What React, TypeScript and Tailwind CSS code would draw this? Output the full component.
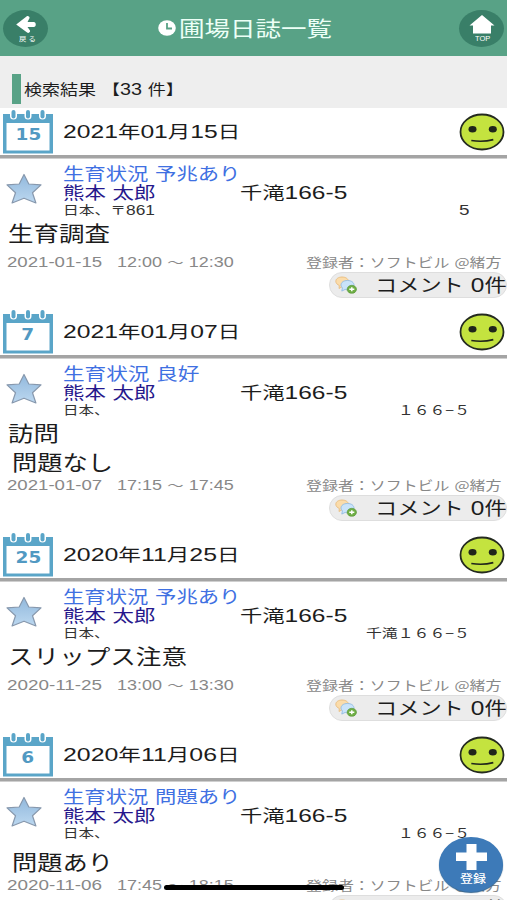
import { useLayoutEffect, useRef, useState } from "react";

type Entry = {
  date: string;
  day: string;
  status: string;
  statusWidth: number;
  address: string;
  addressWidth: number;
  lot: string;
  lotWidth: number;
  notes: { text: string; width: number; indent?: boolean }[];
  dateShort: string;
  time: string;
};

const entries: Entry[] = [
  {
    date: "2021年01月15日",
    day: "15",
    status: "生育状況 予兆あり",
    statusWidth: 178,
    address: "日本、〒861",
    addressWidth: 92,
    lot: "5",
    lotWidth: 11,
    notes: [{ text: "生育調査", width: 102 }],
    dateShort: "2021-01-15",
    time: "12:00 ～ 12:30",
  },
  {
    date: "2021年01月07日",
    day: "7",
    status: "生育状況 良好",
    statusWidth: 137,
    address: "日本、",
    addressWidth: 47,
    lot: "１６６−５",
    lotWidth: 72,
    notes: [
      { text: "訪問", width: 51 },
      { text: "問題なし", width: 101, indent: true },
    ],
    dateShort: "2021-01-07",
    time: "17:15 ～ 17:45",
  },
  {
    date: "2020年11月25日",
    day: "25",
    status: "生育状況 予兆あり",
    statusWidth: 178,
    address: "日本、",
    addressWidth: 47,
    lot: "千滝１６６−５",
    lotWidth: 104,
    notes: [{ text: "スリップス注意", width: 179 }],
    dateShort: "2020-11-25",
    time: "13:00 ～ 13:30",
  },
  {
    date: "2020年11月06日",
    day: "6",
    status: "生育状況 問題あり",
    statusWidth: 178,
    address: "日本、",
    addressWidth: 47,
    lot: "１６６−５",
    lotWidth: 72,
    notes: [{ text: "問題あり", width: 101, indent: true }],
    dateShort: "2020-11-06",
    time: "17:45 ～ 18:15",
  },
];

// Extended lettering: stretches one line of text to the given width.
// Latin digits are set a little larger than the kana and kanji around them.
function Wide({ width, className = "", children }: { width: number; className?: string; children: string }) {
  const ref = useRef<HTMLSpanElement>(null);
  const [scale, setScale] = useState(1.2);

  useLayoutEffect(() => {
    if (ref.current) setScale(width / ref.current.offsetWidth);
  }, [width, children]);

  return (
    <span className={"block h-[1em] shrink-0 whitespace-nowrap leading-none [word-spacing:.09em] " + className} style={{ width }}>
      <span ref={ref} className="inline-block origin-left" style={{ transform: `scaleX(${scale})` }}>
        {children.split(/([0-9:-]+)/).map((part, i) =>
          i % 2 ? (
            <span key={i} className="font-['Liberation_Sans'] text-[1.1em] leading-[0]">{part}</span>
          ) : (
            part
          )
        )}
      </span>
    </span>
  );
}

function CalendarIcon({ day }: { day: string }) {
  return (
    <div className="relative h-[44px] w-[50px] shrink-0">
      <svg viewBox="0 0 50 44" className="block h-full w-full">
        <path d="M0 4h50v39.500h-50z" fill="#5aa5c8" />
        <path d="M3.500 13h43v27.500h-43z" fill="#fff" />
        {[10.5, 25, 39.500].map((x) => (
          <g key={x}>
            <rect x={x - 3.500} y="-1" width="7" height="10.500" rx="3.500" fill="#fff" />
            <rect x={x - 2} y="0" width="4" height="8.500" rx="2" fill="#5aa5c8" />
          </g>
        ))}
      </svg>
      <div className="absolute inset-x-0 top-[17px] flex justify-center text-[#5199c2]">
        <span className="origin-center scale-x-[1.12] font-['DejaVu_Sans'] text-[16.500px] font-bold leading-none">{day}</span>
      </div>
    </div>
  );
}

function FaceIcon() {
  return (
    <svg viewBox="0 0 46 38" className="block h-[38px] w-[46px] shrink-0">
      <ellipse cx="23" cy="19" rx="21.500" ry="17.500" fill="#c4e33f" stroke="#242a20" strokeWidth="1.800" />
      <ellipse cx="13.500" cy="16.300" rx="4" ry="3.300" fill="#20251b" />
      <ellipse cx="33.800" cy="16.300" rx="4" ry="3.300" fill="#20251b" />
      <path d="M12.300 27.500q11.500 1.800 22-.8" fill="none" stroke="#20251b" strokeWidth="1.700" />
    </svg>
  );
}

function StarIcon() {
  return (
    <svg viewBox="0 0 36 32" className="block h-[32px] w-[36px]">
      <defs>
        <linearGradient id="star" x1="0" y1="0" x2="0" y2="1">
          <stop offset="0" stopColor="#91b8dc" />
          <stop offset="1" stopColor="#bcd8f0" />
        </linearGradient>
      </defs>
      <path
        d="M18 1.500l4.800 9.500 12.200.9-8.500 7.800 3.400 10.300-11.900-4.800-11.900 4.800 3.400-10.300-8.500-7.800 12.200-.9z"
        fill="url(#star)"
        stroke="#8798ad"
        strokeWidth="1.200"
        strokeLinejoin="round"
      />
    </svg>
  );
}

function BubblesIcon() {
  return (
    <svg viewBox="0 0 22 18" className="block h-[18px] w-[22px] shrink-0">
      <path d="M7 1c4 0 6.500 2 6.500 4.500s-2.500 5-6 5l-3.500 2 .3-3c-2-1-3.500-2.200-3.500-4.200 0-2.500 2.700-4.300 6.200-4.300z" fill="#fbdcaa" stroke="#e6b876" strokeWidth=".8" />
      <path d="M12.500 4.500c4 0 6.500 2 6.500 4.700s-2.500 4.600-6 4.600c-1 0-2 0-2.800-.4l-3.400 1.700.6-3.200c-.9-.8-1.400-1.800-1.400-2.800 0-2.700 2.500-4.600 6.500-4.600z" fill="#c9e3fa" stroke="#8ab6df" strokeWidth=".8" />
      <ellipse cx="16.800" cy="13.300" rx="4.700" ry="4" fill="#6fae45" stroke="#569436" strokeWidth=".6" />
      <path d="M16.800 11.300v4M14.300 13.300h5" stroke="#fff" strokeWidth="1.500" />
    </svg>
  );
}

function EntryCard({ entry }: { entry: Entry }) {
  const single = entry.notes.length === 1;
  return (
    <article className={"shrink-0 " + (single ? "h-[200px]" : "h-[223px]")}>
      <div className="flex h-[47px] items-center justify-between pl-[3px] pr-[2px]">
        <div className="flex items-center gap-[10px]">
          <CalendarIcon day={entry.day} />
          <Wide width={177} className="mb-[2px] text-[17.500px]">{entry.date}</Wide>
        </div>
        <FaceIcon />
      </div>
      <div className="h-[4px] border-b border-[#cfcfcf] bg-[#a4a4a4]" />

      <div className="flex h-[61px] pl-[6px]">
        <div className="w-[57px] pt-[14px]">
          <StarIcon />
        </div>
        <div className="flex-1 pt-[5px]">
          <div className="h-[19px]">
            <Wide width={entry.statusWidth} className="text-[17.500px] text-[#3f70e2]">{entry.status}</Wide>
          </div>
          <div className="flex h-[21px]">
            <div className="w-[177px]">
              <Wide width={93} className="text-[17.500px] text-[#26188c]">熊本 太郎</Wide>
            </div>
            <Wide width={107} className="text-[17.500px]">千滝166-5</Wide>
          </div>
          <div className="flex justify-between pr-[37px] text-[12.500px] text-[#333]">
            <Wide width={entry.addressWidth}>{entry.address}</Wide>
            <Wide width={entry.lotWidth}>{entry.lot}</Wide>
          </div>
        </div>
      </div>

      <div className={"pl-2 " + (single ? "h-[32px] " : "h-[55px] ") + (single && entry.notes[0].indent ? "pt-[8px]" : "pt-[2px]")}>
        {entry.notes.map((n) => (
          <div key={n.text} className={"h-[29px] " + (n.indent ? "pl-[4px]" : "")}>
            <Wide width={n.width} className="text-[21px]">{n.text}</Wide>
          </div>
        ))}
      </div>

      <div className="flex h-[20px] items-center pb-px pl-[7px] pr-[6px] text-[13px] text-[#888]">
        <Wide width={95}>{entry.dateShort}</Wide>
        <Wide width={117} className="ml-[15px]">{entry.time}</Wide>
        <Wide width={195} className="ml-auto">登録者：ソフトビル @緒方</Wide>
      </div>
      <div className="ml-[329px] flex h-[26px] items-center rounded-full border border-[#dedede] bg-[#ececec] pl-[5px]">
        <BubblesIcon />
        <Wide width={132} className="mb-[3px] ml-[18px] text-[18px]">コメント 0件</Wide>
      </div>
    </article>
  );
}

export default function App() {
  return (
    <div className="relative flex h-[900px] w-[507px] flex-col overflow-hidden bg-white font-['Noto_Sans_CJK_JP',sans-serif] text-[#1c1c1c]">
      <header className="flex h-[56px] shrink-0 items-center justify-between bg-[#58a286] px-[3px]">
        <button className="flex h-[37px] w-[45px] flex-col items-center rounded-[50%] bg-[#397f68] pt-[6px] text-[6px] text-white">
          <svg viewBox="0 0 20 17" className="h-[17px] w-[20px] shrink-0">
            <path d="M10.500 .4c1.500-1 3.800.5 2.800 2.200l-1.800 3.400h6.300c2.600 0 2.600 5 0 5h-6.300l2.300 3.200c1.100 1.600-1.100 3.400-2.700 2.400L.2 8.500z" fill="#fff" />
          </svg>
          <Wide width={17} className="mt-[3px]">戻 る</Wide>
        </button>
        <h1 className="mr-[18px] flex items-center gap-[3px] text-[21px] text-[#ecfff6]">
          <svg viewBox="0 0 18 16" className="h-[16px] w-[18px]">
            <ellipse cx="9" cy="8" rx="8.800" ry="7.800" fill="#fff" />
            <path d="M9 3v5.500h5" fill="none" stroke="#58a286" strokeWidth="1.800" />
          </svg>
          <Wide width={153} className="mb-[2px]">圃場日誌一覧</Wide>
        </h1>
        <button className="flex h-[37px] w-[45px] flex-col items-center rounded-[50%] bg-[#397f68] pt-[5px] font-['Liberation_Sans'] text-[6.500px] text-white">
          <svg viewBox="0 0 26 19" className="h-[19px] w-[26px] shrink-0">
            <path d="M13 0l12.500 10.500h-3.500v8h-18v-8h-3.500z" fill="#fff" />
          </svg>
          <Wide width={15} className="mt-[2px]">TOP</Wide>
        </button>
      </header>

      <div className="flex h-[52px] shrink-0 items-end bg-[#eee] pb-[4px] pl-[12px]">
        <div className="h-[30px] w-[9px] bg-[#58a286]" />
        <div className="flex h-[30px] items-center gap-[6px] pl-[3px] text-[14.500px]">
          <Wide width={72}>検索結果</Wide>
          <Wide width={82}>【33 件】</Wide>
        </div>
      </div>

      {entries.map((e) => (
        <EntryCard key={e.date} entry={e} />
      ))}

      {/* Home indicator */}
      <div className="absolute left-[164px] top-[885px] h-[5px] w-[180px] rounded-full bg-black" />

      {/* Add entry */}
      <button className="absolute left-[439px] top-[837px] flex h-[55px] w-[64px] flex-col items-center rounded-[50%] bg-[#3d7ab8] pt-[7px] text-[11px] font-medium text-white shadow-[0_1px_1px_#33648f]">
        <svg viewBox="0 0 31 26" className="h-[26px] w-[31px] shrink-0">
          <path d="M10.500 0h10v8.500h10.500v8.500h-10.500v9h-10v-9h-10.500v-8.500h10.500z" fill="#fff" />
        </svg>
        <Wide width={26} className="mt-[3px]">登録</Wide>
      </button>
    </div>
  );
}
